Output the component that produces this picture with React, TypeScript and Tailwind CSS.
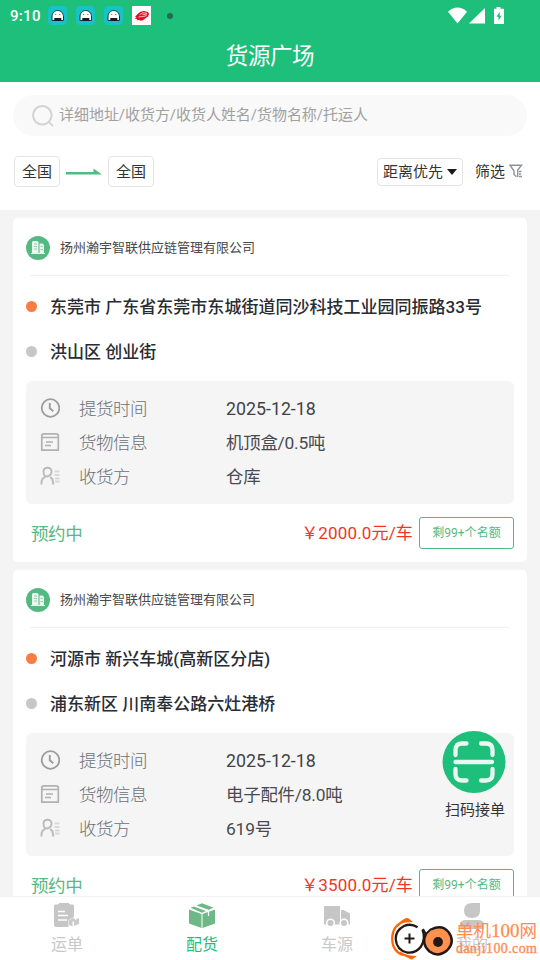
import type { ReactNode } from "react";

type Order = {
  company: string;
  from: string;
  to: string;
  date: string;
  goods: string;
  receiver: string;
  price: string;
};

const orders: Order[] = [
  {
    company: "扬州瀚宇智联供应链管理有限公司",
    from: "东莞市 广东省东莞市东城街道同沙科技工业园同振路33号",
    to: "洪山区 创业街",
    date: "2025-12-18",
    goods: "机顶盒/0.5吨",
    receiver: "仓库",
    price: "￥2000.0元/车",
  },
  {
    company: "扬州瀚宇智联供应链管理有限公司",
    from: "河源市 新兴车城(高新区分店)",
    to: "浦东新区 川南奉公路六灶港桥",
    date: "2025-12-18",
    goods: "电子配件/8.0吨",
    receiver: "619号",
    price: "￥3500.0元/车",
  },
];

function GhostIcon() {
  return (
    <svg viewBox="0 0 19 19" className="h-[19px] w-[19px]">
      <rect width="19" height="19" rx="4.5" fill="#16c4c8" />
      <path d="M4 14.500V11C4 7 6.500 4.500 9.700 4.500s5.800 2.500 5.800 6.500v3.500z" fill="#fff" stroke="#15383a" strokeWidth="1" />
      <path d="M6.300 12h7v3h-7z" fill="#1b1b1b" />
      <path d="M7.200 8.500h1M11.300 8.500h1" stroke="#666" strokeWidth="1" />
    </svg>
  );
}

function StatusBar() {
  return (
    <div className="flex h-[30px] items-center pt-[1px] pl-[10px] pr-[36px] text-white">
      <span className="w-[38px] pt-[2px] text-[15px] font-medium tracking-[0.3px]">9:10</span>
      <div className="flex items-center gap-[9px]">
        <GhostIcon />
        <GhostIcon />
        <GhostIcon />
        <svg viewBox="0 0 19 19" className="h-[19px] w-[19px]">
          <path d="M0 0h19v19H0z" fill="#fff" />
          <path d="M5.500 8 8.500 5.800 12 5l4 1 1 2-1 2.500-2.500 1.700-2.500 2-2.500.5-1.500-.7-2.500.2 1-1.300-3-.2 2-1.200-1.500-.6z" fill="#e50d22" />
          <path d="M7.500 8.700 11 6.800l4 .5-1.500 1.200-3 .2M6.500 11l6.500-.8 2-1.400" fill="none" stroke="#fff" strokeWidth=".7" />
        </svg>
      </div>
      <span className="ml-[16px] h-[6px] w-[6px] rounded-full bg-[#1e6b50]" />
      <svg viewBox="0 0 56 18" className="ml-auto h-[18px] w-[56px]" fill="#fff">
        <path d="M0 4.700Q9.500-3.500 19 4.700L9.500 16.500z" />
        <path d="M37 1v15.500H21z" />
        <path d="M48.500 0h4v1.700H56V17H46V1.700h2.500z" />
        <path d="m51.500 5-3 4.700h2V13.500l3.200-4.700h-1.900z" fill="#1dbf7b" />
      </svg>
    </div>
  );
}

function SearchIcon() {
  return (
    <svg viewBox="0 0 22 22" className="ml-px h-[22px] w-[22px]" fill="none" stroke="#d2d2d2">
      <circle cx="10.300" cy="10.300" r="9.300" strokeWidth="2" />
      <path d="m17 17.200 4 4" strokeWidth="1.800" />
    </svg>
  );
}

function FilterIcon() {
  return (
    <svg viewBox="0 0 14 14" className="ml-[4px] h-[14px] w-[14px]" fill="none" stroke="#8f9297" strokeWidth="1.400">
      <path d="M7.500 12.800 5 10.500V7L1 1.200h11.500L8.700 6v7" />
      <path d="M10 7.500h2.500M10 10h2M10 12.500h3" />
    </svg>
  );
}

function CompanyIcon() {
  return (
    <svg viewBox="0 0 24 24" className="h-[24px] w-[24px]">
      <circle cx="12" cy="12" r="12" fill="#55b982" />
      <path d="M6 6.500Q6 5 7.500 5H11q1.500 0 1.500 1.500V17H6zM13.500 7.500H16q2 0 2 2V17h-4.500zM5 17h14v1H5z" fill="#eaf7ef" />
      <path d="M8 8h3M8 10.500h3M8 13h3M14.500 10.500H17M14.500 13.500H17" stroke="#8fd3ae" strokeWidth="1" />
    </svg>
  );
}

function ClockIcon() {
  return (
    <svg viewBox="0 0 20 20" className="h-[20px] w-[20px]" fill="none" stroke="#9b9c9e">
      <circle cx="10.500" cy="10" r="8.800" strokeWidth="1.800" />
      <path d="M9.800 5v5.200l3.500 3" strokeWidth="1.900" />
    </svg>
  );
}

function GoodsIcon() {
  return (
    <svg viewBox="0 0 20 20" className="h-[20px] w-[20px]" fill="none" stroke="#b0b1b2" strokeWidth="1.700">
      <path d="M1.800 5.500V3.800q0-2 2-2h12.500q2 0 2 2v14.400H1.800z" />
      <path d="M2 5.500h16" strokeWidth="1.500" />
      <path d="M6 10h7M5 13.500h6" strokeWidth="1.500" />
    </svg>
  );
}

function ReceiverIcon() {
  return (
    <svg viewBox="0 0 20 20" className="h-[20px] w-[20px]" fill="none">
      <path d="M3.500 5.500Q3.500 1.700 7.500 1.700t4 3.800-4 4.900-4-4.900zM1.500 18.500V16q0-3.500 3.500-5M10 11q3 1.500 3 5v2.500" stroke="#b9babb" strokeWidth="1.900" />
      <path d="M14.500 5.500h5M14.500 9h5M15 12.500h4.500M15 15.500h4.500" stroke="#d9d9da" strokeWidth="2.200" />
    </svg>
  );
}

function InfoRow({ icon, label, value, wide }: { icon: ReactNode; label: string; value: string; wide?: boolean }) {
  return (
    <div className="flex h-[34px] items-center">
      {icon}
      <span className="mt-[2px] ml-[19px] w-[147px] text-[17.500px] tracking-[-0.500px] font-light text-[#6c6f76]">{label}</span>
      <span className={wide ? "mt-[2px] text-[17.800px] text-[#414348]" : "mt-[2px] text-[17.400px] tracking-[-0.200px] text-[#484a4f]"}>{value}</span>
    </div>
  );
}

function OrderCard({ order }: { order: Order }) {
  return (
    <article className="h-[344px] shrink-0 rounded-[5px] bg-white px-[13px]">
      <div className="flex h-[57px] items-center gap-[10px] pt-[2px]">
        <CompanyIcon />
        <span className="text-[13px] text-[#484848]">{order.company}</span>
      </div>
      <div className="mr-[5px] ml-[4px] h-px bg-[#f1f1f1]" />
      <div className="flex h-[62px] items-center">
        <span className="mb-[2px] h-[11px] w-[11px] rounded-full bg-[#f97d42]" />
        <span className="mt-px ml-[13px] text-[17px] font-medium tracking-[0.015px] whitespace-nowrap text-[#282c33]">{order.from}</span>
      </div>
      <div className="flex h-[28px] items-center">
        <span className="mb-[2px] h-[11px] w-[11px] rounded-full bg-[#c6c6c6]" />
        <span className="mt-px ml-[13px] text-[17px] font-medium whitespace-nowrap text-[#282c33]">{order.to}</span>
      </div>
      <div className="mt-[15px] h-[123px] rounded-[6px] bg-[#f5f5f5] pt-[10px] pl-[14px]">
        <InfoRow icon={<ClockIcon />} label="提货时间" value={order.date} wide />
        <InfoRow icon={<GoodsIcon />} label="货物信息" value={order.goods} />
        <InfoRow icon={<ReceiverIcon />} label="收货方" value={order.receiver} />
      </div>
      <div className="mt-[13px] flex h-[32px] items-center pl-[5px]">
        <span className="mt-[2px] text-[17.500px] tracking-[-0.400px] text-[#55b982]">预约中</span>
        <span className="mt-[2px] mr-[6px] ml-auto text-[17px] tracking-[0.15px] text-[#ee3824]">{order.price}</span>
        <span className="flex h-[32px] w-[95px] items-center justify-center rounded-[3px] border border-[#55b982] text-[12px] text-[#55b982]">
          剩99+个名额
        </span>
      </div>
    </article>
  );
}

function WaybillIcon() {
  return (
    <svg viewBox="0 0 26 26" className="h-[26px] w-[26px]">
      <path d="M0 3q0-1.500 1.500-1.500H4L5.500 0h9L16 1.500h2.500Q20 1.500 20 3v11l-5.500 3v7H2q-2 0-2-2z" fill="#c6c6c6" />
      <path d="M4 8.500h7M4 12.500h10M4 17h9" stroke="#fff" strokeWidth="1.500" />
      <path d="m15 17 4-2 2 1v2.500h-2.500v5L15 22zM20 17.500l5-2.500v6l-5 2z" fill="#cacaca" />
    </svg>
  );
}

function BoxIcon() {
  return (
    <svg viewBox="0 0 26 26" className="h-[26px] w-[26px]" fill="#6db887">
      <path d="M0 6.500 12.500 11v14L0 20.500zM13.500 11 26 6.500v14L13.500 25zM1.500 4.800 5 3.400l12 4.500-4 1.800zM7.500 2.500 13 .3l11.500 4.500-5 2z" />
      <path d="m6 3 13.500 5v5" fill="none" stroke="#fff" strokeWidth="1.300" />
    </svg>
  );
}

function TruckIcon() {
  return (
    <svg viewBox="0 0 26 26" className="h-[26px] w-[26px]" fill="#c6c6c6">
      <path d="M0 3h16v18.500H0zM17 7h2.500L26 10.500v11h-9z" />
      <circle cx="6.500" cy="20" r="4.600" fill="#fff" />
      <circle cx="20" cy="20" r="4.600" fill="#fff" />
      <circle cx="6.500" cy="20" r="3" />
      <circle cx="20" cy="20" r="3" />
    </svg>
  );
}

function PersonIcon() {
  return (
    <svg viewBox="0 0 26 26" className="h-[26px] w-[26px]" fill="#c6c6c6">
      <path d="M5 7.500Q5 0 13 0h8v7.500q0 7.500-8 7.500T5 7.500zM1 26v-4q0-5 6-5h12q6 0 6 5v4z" />
    </svg>
  );
}

function Tab({ icon, label, active }: { icon: ReactNode; label: string; active?: boolean }) {
  return (
    <div className="flex flex-1 flex-col items-center pt-[6px] pr-[1px]">
      {icon}
      <span className={active ? "mt-[4px] text-[16px] leading-[24px] text-[#1dbf7b]" : "mt-[4px] text-[16px] leading-[24px] text-[#c8c8c8]"}>
        {label}
      </span>
    </div>
  );
}

function Watermark() {
  return (
    <div className="absolute top-[917px] left-[391px] h-[43px] w-[149px]">
      <svg viewBox="0 0 149 43" className="absolute top-0 left-0 h-[43px] w-[149px]" fill="none">
        <circle cx="18.500" cy="21.500" r="14" fill="#fff" />
        <path d="M14 4Q1.500 8 1.200 21T12 38" stroke="#ff6500" strokeWidth="2.200" />
        <path d="M8 6.500Q12 1 17 1l5 4-8 .5zM8 36.500q8 4 13 6l5-3.500q-10 0-17-4.500z" fill="#ff6500" />
        <path d="M26.500 10.200Q20 6 13 9 4.500 13.500 4.700 22q.8 11 11.300 13.500 9 1 14-6 5-8 1.500-17" stroke="#231815" strokeWidth="2.300" />
        <path d="M40 12.500Q51 7 57.500 15q7 9.500-1 18-9 8-18 1.500Q30 27 35 16.500" fill="#ff914f" stroke="#231815" strokeWidth="2.400" />
        <path d="m32 12 3 5 5-5" stroke="#231815" strokeWidth="1.800" />
        <circle cx="47" cy="25" r="4.900" fill="#231815" />
        <path d="M13.500 21.500h10M18.500 16.500v10" stroke="#231815" strokeWidth="2" />
      </svg>
      <span className="absolute top-[1px] left-[65px] text-[17.500px] leading-[26px] whitespace-nowrap text-[#ff8c50]">
        单机<span className="font-['Liberation_Serif'] text-[19px] [-webkit-text-stroke:0.25px_#ff8c50]">100</span>网
      </span>
      <span className="absolute top-[23px] left-[65px] font-['Liberation_Serif',serif] text-[14px] leading-[18px] tracking-[0.4px] whitespace-nowrap text-[#ff8c50] [-webkit-text-stroke:0.35px_#ff8c50]">
        danji100.com
      </span>
    </div>
  );
}

export default function App() {
  return (
    <main className="relative flex h-[960px] w-[540px] flex-col overflow-hidden bg-[#f4f4f4] font-[Roboto,'Noto_Sans_CJK_SC',sans-serif]">
      <header className="h-[82px] shrink-0 bg-[#1dbf7b]">
        <StatusBar />
        <h1 className="text-center text-[22.500px] leading-[53px] tracking-[-0.400px] text-white">货源广场</h1>
      </header>

      <section className="h-[128px] shrink-0 bg-white px-[13px] pt-[13px]">
        <div className="flex h-[41px] items-center rounded-full bg-[#f9f9f9] pl-[18px]">
          <SearchIcon />
          <span className="ml-[5px] text-[15px] tracking-[-0.040px] text-[#a1a1a1]">详细地址/收货方/收货人姓名/货物名称/托运人</span>
        </div>
        <div className="mt-[20px] flex h-[31px] items-center pl-[1px] text-[15px] text-[#333]">
          <span className="flex h-[31px] w-[46px] items-center justify-center rounded-[4px] border border-[#e5e5e5] pt-[2px]">全国</span>
          <svg viewBox="0 0 36 8" className="mx-[6px] h-[8px] w-[36px]" fill="#55b982">
            <path d="M0 4h27.500V.5L36 6.500H0z" />
          </svg>
          <span className="flex h-[31px] w-[46px] items-center justify-center rounded-[4px] border border-[#e5e5e5] pt-[2px]">全国</span>
          <span className="ml-auto flex h-[28px] w-[86px] items-center rounded-[4px] border border-[#e5e5e5] pt-[1px] pl-[5px]">
            距离优先
            <svg viewBox="0 0 10 6" className="mb-px ml-[4px] h-[6px] w-[10px]" fill="#1a1a1a">
              <path d="M0 0h10L5 6z" />
            </svg>
          </span>
          <span className="mt-px mr-[4px] ml-[12px] flex items-center">
            筛选
            <span className="mb-[2px]">
              <FilterIcon />
            </span>
          </span>
        </div>
      </section>

      <section className="flex h-[686px] flex-col gap-[8px] overflow-hidden px-[13px] pt-[8px]">
        {orders.map((order) => (
          <OrderCard key={order.from} order={order} />
        ))}
      </section>

      <nav className="flex h-[64px] shrink-0 border-t border-[#f3f3f3] bg-white">
        <Tab icon={<WaybillIcon />} label="运单" />
        <Tab icon={<BoxIcon />} label="配货" active />
        <Tab icon={<TruckIcon />} label="车源" />
        <Tab icon={<PersonIcon />} label="我的" />
      </nav>

      <button className="absolute top-[731px] left-[442px] flex w-[64px] flex-col items-center">
        <svg viewBox="0 0 64 62" className="h-[62px] w-[64px]">
          <ellipse cx="32" cy="31" rx="31.500" ry="31" fill="#1dbf7b" />
          <path d="M13.500 24v-5q0-6.500 6.500-6.500h4.500M39 12.500h5q6.500 0 6.500 6.500v5M13.500 38v5q0 6.500 6.500 6.500h4.500M39 49.500h5q6.500 0 6.500-6.500v-5M13.500 31h36.500" fill="none" stroke="#e9f9f2" strokeWidth="4.300" strokeLinecap="round" />
        </svg>
        <span className="mt-[6px] ml-[2px] text-[15px] leading-[22px] text-[#333]">扫码接单</span>
      </button>

      <Watermark />
    </main>
  );
}
